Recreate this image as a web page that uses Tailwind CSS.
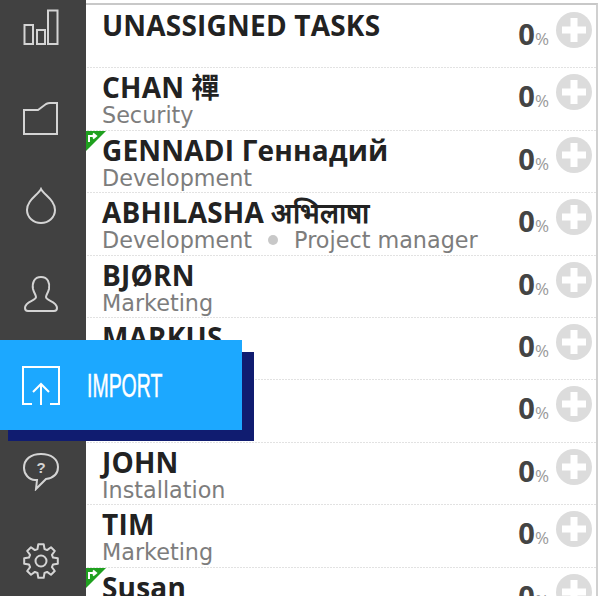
<!DOCTYPE html>
<html lang="en">
<head>
<meta charset="UTF-8">
<script src="https://cdn.jsdelivr.net/npm/@tailwindcss/browser@4"></script>
</head>
<body class="bg-white">
<div class="relative flex h-[596px] w-[600px] overflow-hidden font-['DejaVu_Sans','Noto_Sans','Noto_Sans_CJK_TC',sans-serif]">
  <!-- sidebar -->
  <aside class="flex w-[86px] shrink-0 flex-col items-center bg-[#414141] pr-[4px] pt-[8px] text-[#d4d4d4]">
    <div class="flex h-[89px] w-full shrink-0 justify-center">
      <svg class="h-[38px] w-[38px]" viewBox="0 0 38 38" fill="none" stroke="currentColor" stroke-width="2"><rect x="2.500" y="17" width="8.500" height="19"/><rect x="15" y="22" width="8" height="14"/><rect x="26" y="2.500" width="9.500" height="33.500"/></svg>
    </div>
    <div class="flex h-[89px] w-full shrink-0 justify-center">
      <svg class="h-[38px] w-[38px]" viewBox="0 0 38 38" fill="none" stroke="currentColor" stroke-width="2"><path d="M2 13 L16 13 L24 7 Q26 6 28 6 L35 6 L35 37 L2 37 Z"/></svg>
    </div>
    <div class="flex h-[89px] w-full shrink-0 justify-center">
      <svg class="h-[38px] w-[38px]" viewBox="0 0 38 38" fill="none" stroke="currentColor" stroke-width="2"><path d="M19 3 C22 9 33 14 33 24 A14 13 0 0 1 5 24 C5 14 16 9 19 3 Z"/></svg>
    </div>
    <div class="flex h-[89px] w-full shrink-0 justify-center">
      <svg class="h-[38px] w-[38px]" viewBox="0 0 38 38" fill="none" stroke="currentColor" stroke-width="2"><path d="M19 2 C12 2 10 8 11 14 C12 18 14 20 14 22 C14 26 3 26 3 33 C3 35 4 36 6 36 L32 36 C34 36 35 35 35 33 C35 26 24 26 24 22 C24 20 26 18 27 14 C28 8 26 2 19 2 Z"/></svg>
    </div>
    <div class="h-[89px] w-full shrink-0"></div>
    <div class="flex h-[89px] w-full shrink-0 justify-center">
      <svg class="h-[38px] w-[38px]" viewBox="0 0 38 38" fill="none" stroke="currentColor" stroke-width="2"><path d="M19 1 C9 1 2 6 2 15 C2 21 7 27 13 27 L15 27 L14 36 L24 26 C31 25 36 21 36 14 C36 6 29 1 19 1 Z"/><text x="19" y="20" text-anchor="middle" font-size="15" font-weight="700" fill="currentColor" stroke="none" font-family="Liberation Sans">?</text></svg>
    </div>
    <div class="flex h-[89px] w-full shrink-0 justify-center">
      <svg class="h-[38px] w-[38px]" viewBox="0 0 38 38" fill="none" stroke="currentColor" stroke-width="2" stroke-linejoin="round"><path id="gear"/><circle cx="19" cy="19" r="5.500"/></svg>
    </div>
  </aside>

  <!-- task list -->
  <main id="rows" class="mr-[2px] mt-[3px] min-w-0 flex-1 border-r-2 border-t-2 border-r-[#d0d0d0] border-t-[#c8c8c8] pt-px"></main>

  <!-- import callout -->
  <div class="absolute left-[8px] top-[352px] h-[89px] w-[246px] bg-[#101c70]"></div>
  <div class="absolute left-0 top-[340px] flex h-[90px] w-[242px] items-center gap-[26px] bg-[#1ca8ff] pl-[21px] text-white">
    <svg class="h-[40px] w-[40px] shrink-0" viewBox="0 0 40 40" fill="none" stroke="currentColor" stroke-width="2"><path d="M11 39 L2 39 L2 2 L38 2 L38 39 L29 39"/><path d="M20 40 L20 20 M12 27 L20 19 L28 27"/></svg>
    <span class="origin-left scale-x-[.59] font-['Liberation_Sans',sans-serif] text-[33px] leading-none [-webkit-text-stroke:0.5px_white]">IMPORT</span>
  </div>
</div>

<script>
  var rows = [
    { name: 'UNASSIGNED TASKS', sub: '' },
    { name: 'CHAN 禪', sub: 'Security' },
    { name: 'GENNADI Геннадий', sub: 'Development', flag: true },
    { name: 'ABHILASHA अभिलाषा', sub: 'Development', sub2: 'Project manager' },
    { name: 'BJØRN', sub: 'Marketing' },
    { name: 'MARKUS', sub: '' },
    { name: '', sub: '' },
    { name: 'JOHN', sub: 'Installation' },
    { name: 'TIM', sub: 'Marketing' },
    { name: 'Susan', sub: '', flag: true }
  ];
  var flag = `<svg class="absolute left-0 top-0 h-[20px] w-[20px]" viewBox="0 0 20 20"><path d="M0 0H20L0 20Z" fill="#1fa01f"/><path d="M3 11V5H9M7 2.500L10 5L7 7.500" fill="none" stroke="#fff" stroke-width="2"/></svg>`;
  var html = '';
  rows.forEach(function (r) {
    html += `<section class="relative flex h-[62.4px] bg-[linear-gradient(90deg,#c4c4c4_50%,transparent_50%)] bg-[length:3px_1px] bg-bottom bg-repeat-x pl-[16px] pr-[4px]">${r.flag ? flag : ''}
      <div class="min-w-0 flex-1 pt-[3px]">
        <p class="h-[32px] font-['Open_Sans','DejaVu_Sans','Noto_Sans_CJK_TC',sans-serif] text-[28px] leading-[32px] font-bold tracking-[0.2px] text-[#222]">${r.name}</p>
        <p class="flex items-center text-[22.3px] leading-[24px] text-[#7d7d7d]">${r.sub}${r.sub2 ? `<span class="mx-[16px] h-[10px] w-[10px] rounded-full bg-[#c8c8c8]"></span>${r.sub2}` : ''}</p>
      </div>
      <div class="flex pt-[6px]">
        <p class="w-[64px] pr-[7px] pt-[4px] text-right font-['Open_Sans',sans-serif] text-[29px] leading-[36px] font-bold text-[#444]">0<span class="text-[17px] font-normal text-[#999]">%</span></p>
        <svg class="h-[36px] w-[36px]" viewBox="0 0 36 36"><circle cx="18" cy="18" r="18" fill="#dcdcdc"/><path d="M18 6v24M6 18h24" stroke="#fff" stroke-width="7"/></svg>
      </div>
    </section>`;
  });
  document.getElementById('rows').innerHTML = html;

  // eight rounded cogs round the middle
  var d = '';
  for (var k = 0; k < 8; k++) {
    var a = k * Math.PI / 4;
    [[-0.28, 12.5], [-0.16, 17], [0.16, 17], [0.28, 12.5]].forEach(function (p) {
      var x = 19 + p[1] * Math.cos(a + p[0]);
      var y = 19 + p[1] * Math.sin(a + p[0]);
      d += (d ? 'L' : 'M') + x.toFixed(1) + ' ' + y.toFixed(1) + ' ';
    });
  }
  document.getElementById('gear').setAttribute('d', d + 'Z');
</script>
</body>
</html>
